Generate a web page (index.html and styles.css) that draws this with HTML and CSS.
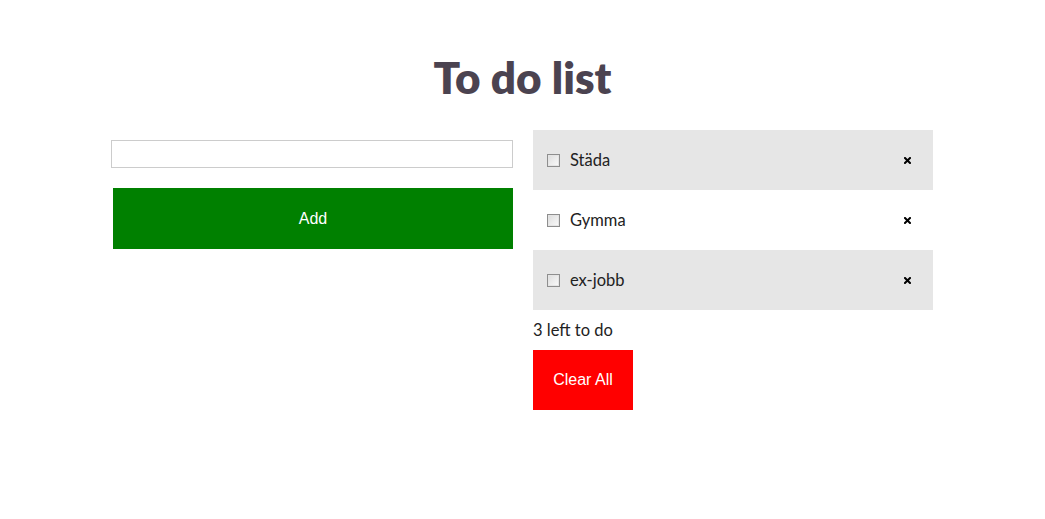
FILE: index.html
```html
<!DOCTYPE html>
<html lang="sv">
<head>
<meta charset="utf-8">
<title>To do list</title>
<link rel="stylesheet" href="styles.css">
</head>
<body>
<h1 class="title">To do list</h1>
<main class="app">
  <section class="entry">
    <input class="entry-input" type="text">
    <button class="btn btn-add" type="button">Add</button>
  </section>
  <section class="todos">
    <ul class="todo-list">
      <li class="todo">
        <input class="todo-check" type="checkbox">
        <span class="todo-text">Städa</span>
        <span class="todo-remove"><svg width="7" height="7" viewBox="0 0 7 7"><path d="M1 1L6 6M6 1L1 6" stroke="#000" stroke-width="2" stroke-linecap="square"/></svg></span>
      </li>
      <li class="todo">
        <input class="todo-check" type="checkbox">
        <span class="todo-text">Gymma</span>
        <span class="todo-remove"><svg width="7" height="7" viewBox="0 0 7 7"><path d="M1 1L6 6M6 1L1 6" stroke="#000" stroke-width="2" stroke-linecap="square"/></svg></span>
      </li>
      <li class="todo">
        <input class="todo-check" type="checkbox">
        <span class="todo-text">ex-jobb</span>
        <span class="todo-remove"><svg width="7" height="7" viewBox="0 0 7 7"><path d="M1 1L6 6M6 1L1 6" stroke="#000" stroke-width="2" stroke-linecap="square"/></svg></span>
      </li>
    </ul>
    <p class="count">3 left to do</p>
    <button class="btn btn-clear" type="button">Clear All</button>
  </section>
</main>
</body>
</html>
```

FILE: styles.css
```css
html, body {
  margin: 0;
  padding: 0;
  background: #fff;
}

body {
  font-family: "Lato", "Open Sans", sans-serif;
  color: #222;
}

.title {
  margin: 0;
  padding-top: 53px;
  font-size: 44px;
  line-height: 48px;
  font-weight: 800;
  color: #4b4350;
  text-align: center;
}

.app {
  width: 823px;
  margin: 29px auto 0;
  display: grid;
  grid-template-columns: 402px 400px;
  justify-content: start;
  column-gap: 20px;
  align-items: start;
}

.entry {
  display: flex;
  flex-direction: column;
  padding-top: 10px;
}

.entry-input {
  box-sizing: border-box;
  width: 402px;
  height: 28px;
  margin: 0;
  border: 1px solid #cccccc;
  padding: 2px 6px;
  font-size: 15px;
}

.btn {
  border: 0;
  margin: 0;
  padding: 0;
  color: #fff;
  font-family: "Liberation Sans", Arial, sans-serif;
  font-size: 16px;
  cursor: pointer;
}

.btn-add {
  margin: 20px 0 0 2px;
  width: 400px;
  height: 61px;
  background: #008000;
}

.todo-list {
  list-style: none;
  margin: 0;
  padding: 0;
}

.todo {
  height: 60px;
  display: flex;
  align-items: center;
  padding: 0 22px 0 14px;
  font-size: 16.5px;
  color: #222;
}

.todo:nth-child(odd) {
  background: #e6e6e6;
}

.todo-check {
  appearance: none;
  -webkit-appearance: none;
  box-sizing: border-box;
  width: 13px;
  height: 13px;
  margin: 0 10px 0 0;
  border: 1px solid #8e8e8e;
  box-shadow: inset 0 0 0 1px #e4e4e4;
  background: linear-gradient(135deg, #dcdcdc, #fbfbfb);
}

.todo-text {
  flex: 1;
}

.todo-remove {
  display: flex;
  width: 7px;
  height: 7px;
}

.count {
  margin: 10px 0;
  font-size: 16.5px;
  line-height: 20px;
  color: #222;
}

.btn-clear {
  display: block;
  width: 100px;
  height: 60px;
  background: #ff0000;
}
```
